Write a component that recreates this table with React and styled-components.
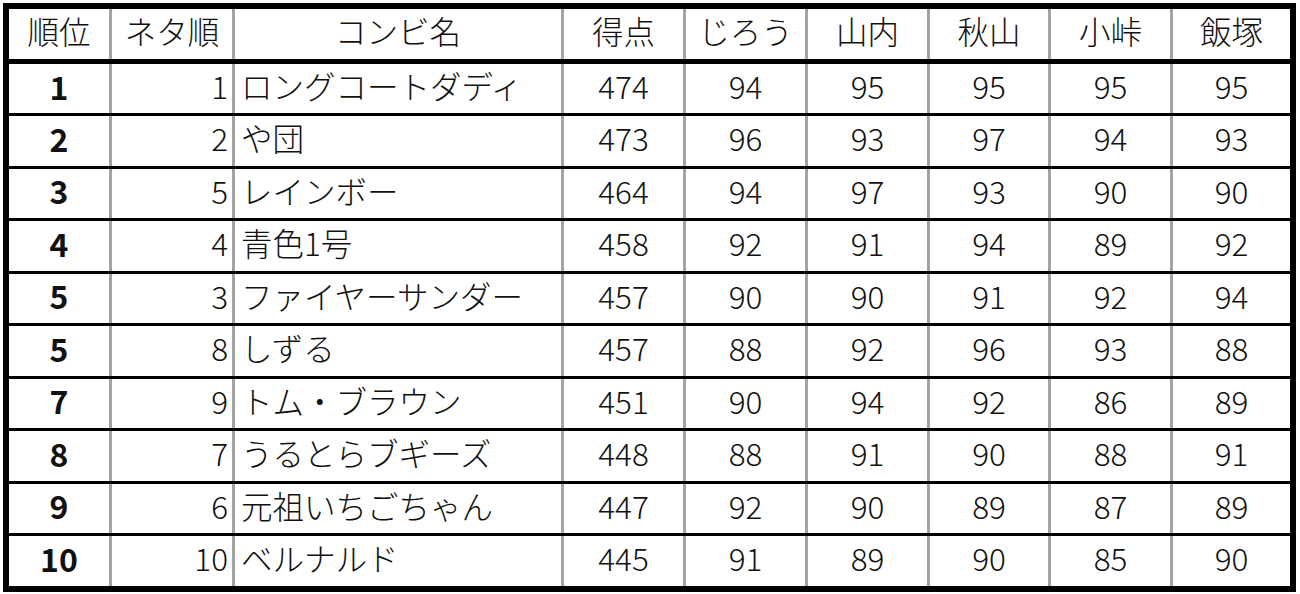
import React from "react";
import styled, { createGlobalStyle } from "styled-components";

const rows = [
  ["1", "1", "ロングコートダディ", 474, 94, 95, 95, 95, 95],
  ["2", "2", "や団", 473, 96, 93, 97, 94, 93],
  ["3", "5", "レインボー", 464, 94, 97, 93, 90, 90],
  ["4", "4", "青色1号", 458, 92, 91, 94, 89, 92],
  ["5", "3", "ファイヤーサンダー", 457, 90, 90, 91, 92, 94],
  ["5", "8", "しずる", 457, 88, 92, 96, 93, 88],
  ["7", "9", "トム・ブラウン", 451, 90, 94, 92, 86, 89],
  ["8", "7", "うるとらブギーズ", 448, 88, 91, 90, 88, 91],
  ["9", "6", "元祖いちごちゃん", 447, 92, 90, 89, 87, 89],
  ["10", "10", "ベルナルド", 445, 91, 89, 90, 85, 90],
];

const headers = ["順位", "ネタ順", "コンビ名", "得点", "じろう", "山内", "秋山", "小峠", "飯塚"];

// widths include the 3px grey divider on the left of every column but the first
const widths = [100, 123, 329, 122, 122, 122, 121, 122, 120];

const GlobalStyle = createGlobalStyle`
  html, body {
    margin: 0;
    padding: 0;
    background: #fff;
  }
  body {
    font-family: "Noto Sans CJK JP", "Noto Sans", sans-serif;
    color: #111;
  }
`;

const Page = styled.div`
  padding: 3px;
`;

const Board = styled.div`
  width: 1281px;
  border: 6px solid #000;
  display: flex;
  flex-direction: column;
`;

const HeadRow = styled.div`
  display: flex;
  height: 55px;
  box-sizing: border-box;
  border-bottom: 5px solid #000;
`;

const Row = styled.div`
  display: flex;
  box-sizing: border-box;
  height: ${(p) => (p.$first ? "49px" : "52.5px")};
  border-top: ${(p) => (p.$first ? "none" : "3px solid #000")};
`;

const Cell = styled.div`
  box-sizing: border-box;
  width: ${(p) => p.$w}px;
  flex: none;
  display: flex;
  align-items: center;
  justify-content: ${(p) => p.$align || "center"};
  padding: ${(p) => (p.$align === "flex-end" ? "0 4px 6px 0" : p.$align === "flex-start" ? "0 0 6px 6px" : "0 0 6px 0")};
  border-left: ${(p) => (p.$lead ? "none" : "3px solid #a3a3a3")};
  font-size: ${(p) => (p.$bold ? "32px" : "31.5px")};
  font-weight: ${(p) => (p.$bold ? 700 : 300)};
  line-height: 1;
  white-space: nowrap;
`;

const alignFor = (i) => (i === 1 ? "flex-end" : i === 2 ? "flex-start" : "center");

export default function App() {
  return (
    <Page>
      <GlobalStyle />
      <Board>
        <HeadRow>
          {headers.map((h, i) => (
            <Cell key={h} $w={widths[i]} $lead={i === 0}>
              {h}
            </Cell>
          ))}
        </HeadRow>
        {rows.map((r, ri) => (
          <Row key={ri} $first={ri === 0}>
            {r.map((v, i) => (
              <Cell
                key={i}
                $w={widths[i]}
                $lead={i === 0}
                $bold={i === 0}
                $align={alignFor(i)}
              >
                {v}
              </Cell>
            ))}
          </Row>
        ))}
      </Board>
    </Page>
  );
}
